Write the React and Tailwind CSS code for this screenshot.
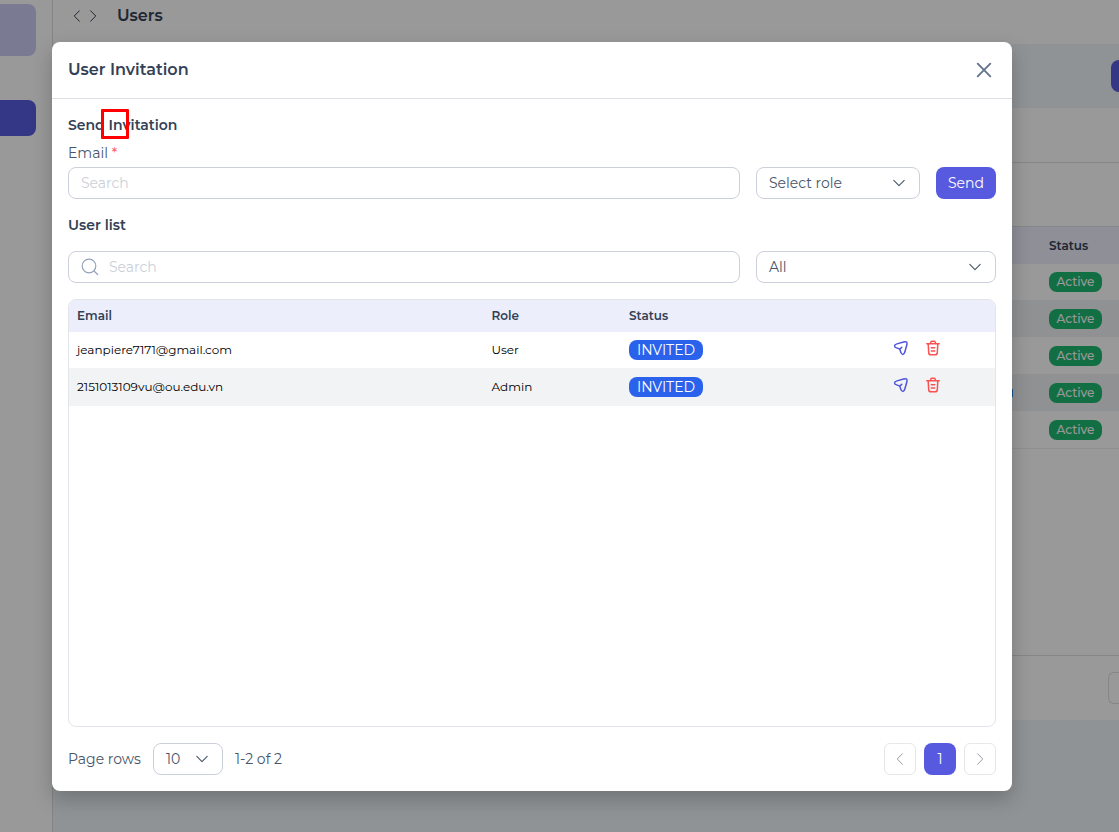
import React from "react";

const Chevron = ({ d, className, w = 16, sw = 1 }) => (
  <svg width={w} height={w} viewBox="0 0 16 16" fill="none" stroke="currentColor" strokeWidth={sw} strokeLinecap="round" strokeLinejoin="round" className={className}>
    <path d={d} />
  </svg>
);
const DOWN = "M2.8 5.4 8 10.6 13.2 5.4";
const LEFT = "M10.4 2.8 5.2 8l5.2 5.2";
const RIGHT = "M5.6 2.8 10.8 8l-5.2 5.2";

const SendIcon = () => (
  <svg width="16" height="16" viewBox="0 0 16 16" fill="none" stroke="#4f54da" strokeWidth="1.5" strokeLinecap="round" strokeLinejoin="round">
    <path d="M4 3.9 10.6 2C13.6 1.1 14.6 2 13.8 5L11.9 11.8C11 15.2 8.9 15.3 7.7 12.1L7.1 10.1C6.9 9.3 6.5 8.9 5.7 8.6L3.6 7.9C.7 6.9.9 4.8 4 3.9ZM6.9 9.1 8.8 7.2" />
  </svg>
);
const TrashIcon = () => (
  <svg width="16" height="16" viewBox="0 0 16 16" fill="none" stroke="#fa5252" strokeWidth="1.5" strokeLinecap="round" strokeLinejoin="round">
    <path d="M1.8 3.7h12.4M5.4 3.5l.4-1.4c.2-.7.5-.9 1.2-.9h2c.7 0 1 .2 1.2.9l.4 1.4M3.2 4l.5 8.6c.1 1.6.6 2.2 2.1 2.2h4.4c1.5 0 2-.6 2.1-2.2l.5-8.6M6.3 7.8h3.4M6.3 10.9h3.4" />
  </svg>
);

const INVITES = [
  ["jeanpiere7171@gmail.com", "User"],
  ["2151013109vu@ou.edu.vn", "Admin"],
];

function Backdrop() {
  return (
    <div className="flex h-full bg-white">
      <aside className="w-[53px] shrink-0 border-r border-[#d9dce0] pt-1">
        <div className="h-[52px] w-9 rounded-r-lg bg-[#cccdf5]" />
        <div className="mt-11 h-9 w-9 rounded-r-lg bg-[#575adf]" />
      </aside>
      <main className="flex min-w-0 flex-1 flex-col bg-[#eff6fa]">
        <header className="flex h-11 shrink-0 items-start bg-white pl-4 pt-1 text-[#334155]">
          <div className="flex pt-1">
            <Chevron d={LEFT} />
            <Chevron d={RIGHT} />
          </div>
          <h1 className="ml-4 text-base font-semibold leading-6">Users</h1>
        </header>
        <div className="flex h-16 shrink-0 items-center justify-end">
          <div className="h-8 w-2 rounded-l-lg bg-[#575adf]" />
        </div>
        <section className="flex h-[612px] shrink-0 flex-col bg-white">
          <div className="h-[55px] shrink-0 border-b border-[#dedfe2]" />
          <div className="h-16 shrink-0 border-b border-[#dedfe2]" />
          <div className="flex h-[37px] shrink-0 items-center bg-[#edeefc] pl-[996px] text-xs font-semibold text-[#334155]">Status</div>
          {[0, 1, 2, 3, 4].map((i) => (
            <div key={i} className={"flex shrink-0 items-center pl-[996px] " + (i ? "h-[37px] " : "h-9 ") + (i % 2 ? "bg-[#f1f2f5]" : "bg-white")}>
              {i === 3 && <span className="-ml-[38px] mr-9 h-2 w-0.5 bg-[#2689e6]" />}
              <span className="flex h-5 w-[53px] shrink-0 items-center justify-center rounded-lg bg-[#1eb871] text-xs font-medium leading-5 text-white">Active</span>
            </div>
          ))}
          <div className="flex-1 border-b border-t border-b-[#dedfe2] border-t-[#eceef0]" />
          <div className="flex h-16 shrink-0 items-center justify-end">
            <div className="h-8 w-[11px] rounded-l-md border border-r-0 border-[#dedfe2]" />
          </div>
        </section>
      </main>
    </div>
  );
}

export default function App() {
  return (
    <div className="relative h-[832px] w-[1119px] overflow-hidden font-['Montserrat','Inter',sans-serif]">
      <Backdrop />
      <div className="absolute inset-0 bg-black/40 pl-[52px] pt-[42px]">
        <div role="dialog" className="flex h-[749px] w-[960px] flex-col rounded-lg bg-white text-sm text-[#475569] shadow-[0_8px_20px_rgba(0,0,0,0.22)]">
          <div className="flex h-[57px] shrink-0 items-center justify-between border-b border-[#dcdfe3] pl-4 pr-5">
            <h2 className="text-base font-semibold text-[#334155]">User Invitation</h2>
            <svg width="16" height="16" viewBox="0 0 16 16" stroke="#64748b" strokeWidth="1.9" strokeLinecap="round">
              <path d="M1.7 1.7 14.3 14.3M14.3 1.7 1.7 14.3" />
            </svg>
          </div>
          <div className="flex flex-1 flex-col px-4 pt-[15px]">
            <h3 className="relative self-start font-semibold leading-[22px] text-[#334155]">
              Send Invitation
              <span className="absolute -top-[5px] left-[33px] h-[30px] w-7 rounded-[1px] border-[3px] border-[#ff0000]" />
            </h3>
            <label className="mt-1.5 leading-[22px]">Email <span className="text-[#fa5252]">*</span></label>
            <div className="mt-[3px] flex h-8 gap-4">
              <div className="flex w-[672px] items-center rounded-lg border border-[#cbd0db] pl-3 text-[#cbd0d8]">Search</div>
              <div className="flex w-[164px] items-center justify-between rounded-lg border border-[#cbd0db] pl-3 pr-3">
                Select role<Chevron d={DOWN} sw={1.1} />
              </div>
              <button className="w-[60px] rounded-lg bg-[#575adf] text-white">Send</button>
            </div>
            <h3 className="mt-[15px] font-semibold leading-[22px] text-[#334155]">User list</h3>
            <div className="mt-[15px] flex h-8 shrink-0 gap-4">
              <div className="flex w-[672px] items-center rounded-lg border border-[#cbd0db] pl-3 text-[#cbd0d8]">
                <svg width="18" height="18" viewBox="0 0 18 18" fill="none" stroke="#94a3b8" strokeWidth="1.2" strokeLinecap="round" className="mr-[10px]">
                  <circle cx="8" cy="8" r="6.8" /><path d="m13 13 3.7 3.5" />
                </svg>
                Search
              </div>
              <div className="flex w-60 items-center justify-between rounded-lg border border-[#cbd0db] pl-3 pr-3">
                All<Chevron d={DOWN} sw={1.1} />
              </div>
            </div>
            <div className="mt-4 h-[428px] shrink-0 overflow-hidden rounded-lg border border-[#e2e4e9] text-xs text-black">
              <div className="flex h-8 items-center bg-[#edeefc] pl-2 font-semibold text-[#334155]">
                <div className="w-[414.5px]">Email</div><div className="w-[137.5px]">Role</div><div>Status</div>
              </div>
              {INVITES.map(([email, role], i) => (
                <div key={email} className={"flex items-center pl-2 " + (i ? "h-[38px] bg-[#f2f3f5]" : "h-9 bg-white")}>
                  <div className="w-[414.5px]">{email}</div>
                  <div className="w-[137.5px]">{role}</div>
                  <div className="w-[264px]"><span className="flex h-5 w-[74px] items-center justify-center rounded-lg bg-[#2a62eb] text-sm text-white">INVITED</span></div>
                  <div className="mb-1 flex gap-4"><SendIcon /><TrashIcon /></div>
                </div>
              ))}
            </div>
            <div className="mt-4 flex h-8 items-center">
              <span className="w-[85px]">Page rows</span>
              <div className="flex h-8 w-[70px] items-center justify-between rounded-lg border border-[#cbd0db] pl-3 pr-3">10<Chevron d={DOWN} sw={1.1} /></div>
              <span className="ml-3">1-2 of 2</span>
              <div className="ml-auto flex gap-2">
                <div className="flex h-8 w-8 items-center justify-center rounded-md border border-[#e5e7eb] text-[#9299a5]"><Chevron d={LEFT} /></div>
                <div className="flex h-8 w-8 items-center justify-center rounded-lg bg-[#575adf] text-white">1</div>
                <div className="flex h-8 w-8 items-center justify-center rounded-md border border-[#e5e7eb] text-[#9299a5]"><Chevron d={RIGHT} /></div>
              </div>
            </div>
          </div>
        </div>
      </div>
    </div>
  );
}
